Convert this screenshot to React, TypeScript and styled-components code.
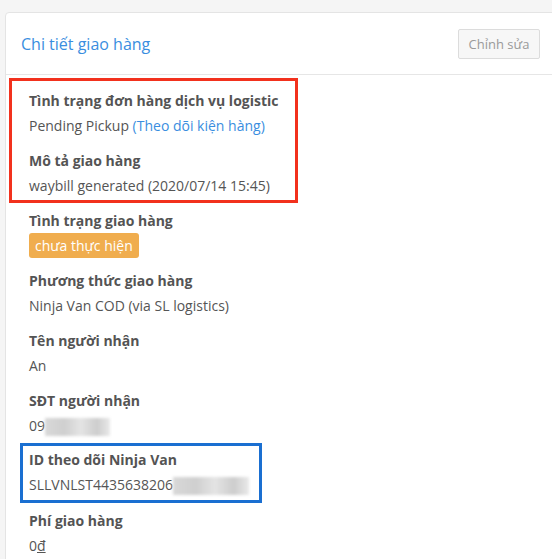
import React from 'react';
import styled, { createGlobalStyle } from 'styled-components';

const GlobalStyle = createGlobalStyle`
    html, body {
        margin: 0;
        padding: 0;
        background: #f5f5f5;
        overflow: hidden;
        font-family: 'Open Sans', 'Noto Sans', sans-serif;
    }
`;

export default function App() {
    return (
        <Page>
            <GlobalStyle />
            <Card>
                <Header>
                    <Title>Chi tiết giao hàng</Title>
                    <EditButton>Chỉnh sửa</EditButton>
                </Header>
                <Body>
                    <Highlight color="#f2311d" offset={20} width={289} top={3} padTop={7} padBottom={2}>
                        <Field>
                            <Label>Tình trạng đơn hàng dịch vụ logistic</Label>
                            <Value>
                                Pending Pickup <Link href="#">(Theo dõi kiện hàng)</Link>
                            </Value>
                        </Field>
                        <Field>
                            <Label>Mô tả giao hàng</Label>
                            <Value>waybill generated (2020/07/14 15:45)</Value>
                        </Field>
                    </Highlight>

                    <Field>
                        <Label>Tình trạng giao hàng</Label>
                        <Value>
                            <Badge>chưa thực hiện</Badge>
                        </Value>
                    </Field>
                    <Field>
                        <Label>Phương thức giao hàng</Label>
                        <Value>Ninja Van COD (via SL logistics)</Value>
                    </Field>
                    <Field>
                        <Label>Tên người nhận</Label>
                        <Value>An</Value>
                    </Field>
                    <Field>
                        <Label>SĐT người nhận</Label>
                        <Value>
                            09
                            <Masked w={65} />
                        </Value>
                    </Field>

                    <Highlight color="#1a6fd1" offset={9} width={242} top={-5} padTop={1} padBottom={3}>
                        <Field>
                            <Label>ID theo dõi Ninja Van</Label>
                            <Value>
                                SLLVNLST4435638206
                                <Masked w={76} />
                            </Value>
                        </Field>
                    </Highlight>

                    <Field>
                        <Label>Phí giao hàng</Label>
                        <Value>
                            0<u>đ</u>
                        </Value>
                    </Field>
                </Body>
            </Card>
        </Page>
    );
}

const Page = styled.div`
    padding: 12px 0 0 5px;
    height: 559px;
    box-sizing: border-box;
    overflow: hidden;
`;

const Card = styled.div`
    width: 560px;
    background: #fff;
    border: 1px solid #e4e4e4;
    border-radius: 4px;
    min-height: 600px;
`;

const Header = styled.div`
    display: flex;
    align-items: center;
    justify-content: space-between;
    height: 61px;
    padding: 0 26px 0 15px;
    border-bottom: 1px solid #e6e6e6;
`;

const Title = styled.h3`
    margin: 0;
    font-size: 16px;
    font-weight: 400;
    color: #3a8ee0;
`;

const EditButton = styled.button`
    width: 82px;
    height: 30px;
    padding: 0;
    border: 1px solid #dcdcdc;
    border-radius: 2px;
    background: #f7f7f7;
    font-family: inherit;
    font-size: 13px;
    color: #9a9a9a;
`;

const Body = styled.div`
    padding: 0 0 0 23px;
`;

/* annotation frame around a group of fields; offset = how far it sticks out left */
const Highlight = styled.div<{
    color: string;
    offset: number;
    width: number;
    top: number;
    padTop: number;
    padBottom: number;
}>`
    box-sizing: border-box;
    width: ${p => p.width}px;
    margin: ${p => p.top}px 0 5px -${p => p.offset}px;
    padding: ${p => p.padTop}px 0 ${p => p.padBottom}px ${p => p.offset - 3}px;
    border: 3px solid ${p => p.color};

    & > div:last-child {
        padding-bottom: 0;
    }
`;

const Field = styled.div`
    padding-bottom: 10px;
`;

const Label = styled.div`
    font-size: 14px;
    line-height: 25px;
    font-weight: 700;
    color: #545454;
`;

const Value = styled.div`
    display: flex;
    align-items: center;
    font-size: 14px;
    line-height: 25px;
    height: 25px;
    color: #555;
    white-space: pre;
`;

const Link = styled.a`
    color: #3a8ee0;
    text-decoration: none;
`;

const Badge = styled.span`
    display: inline-block;
    height: 25px;
    line-height: 25px;
    padding: 0 6px;
    border-radius: 3px;
    background: #f0ad4e;
    color: #fff;
    font-size: 14px;
`;

const Masked = styled.span<{ w: number }>`
    display: inline-block;
    width: ${p => p.w}px;
    height: 18px;
    margin-top: 2px;
    background: linear-gradient(90deg, #d8d8d8, #cfcfcf 30%, #e4e4e4 55%, #cdcdcd 80%, #e9e9e9);
    filter: blur(1.5px);
`;
